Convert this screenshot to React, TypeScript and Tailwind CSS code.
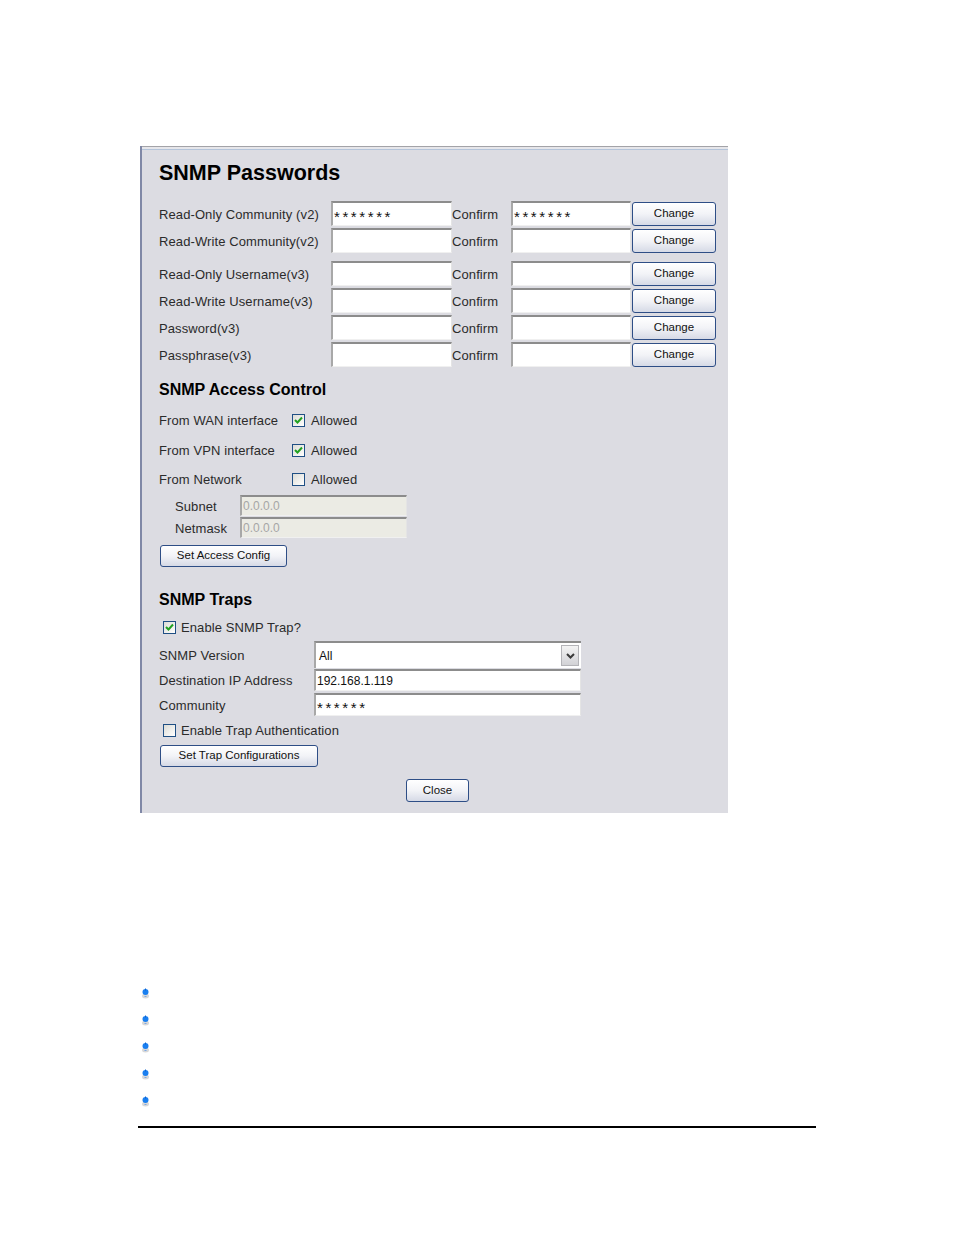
import React from "react";

const font = { fontFamily: '"Liberation Sans", Arial, sans-serif' };
const lbl = "text-[13px] tracking-[0.1px] text-[#2b2b2b] pt-[2px]";
const stars = "tracking-[2.6px] text-[15px] pt-[5px]";

function Field({ w, h, value, disabled, className = "" }: { w: string; h: string; value?: string; disabled?: boolean; className?: string }) {
  return (
    <div
      className={`${w} ${h} ${className} flex items-center border-t-2 border-l-2 border-t-[#8c8c8c] border-l-[#a8a8a8] border-r border-b border-r-[#e4e4e4] border-b-[#f0f0f0] ${disabled ? "bg-[#ebebe4] text-[#a6a6a6]" : "bg-white text-[#111]"} pl-[1px] leading-none overflow-hidden whitespace-nowrap`}
    >
      {value}
    </div>
  );
}

function Btn({ children, w, h = "h-[24px]", className = "" }: { children: React.ReactNode; w: string; h?: string; className?: string }) {
  return (
    <div
      className={`${w} ${h} ${className} flex items-center justify-center rounded-[3px] border border-[#2e4e86] bg-gradient-to-b from-white via-[#f2f3f7] to-[#d6dae6] text-[11.5px] text-[#111] leading-none`}
    >
      {children}
    </div>
  );
}

function Check({ checked }: { checked?: boolean }) {
  return (
    <div className="w-[13px] h-[13px] border border-[#1f4f84] bg-gradient-to-br from-[#dcdcd6] to-white flex items-center justify-center shrink-0">
      {checked && (
        <svg width="9" height="8" viewBox="0 0 9 8">
          <path d="M1 4 L3.5 6.5 L8 1.5" fill="none" stroke="#21a121" strokeWidth="2" />
        </svg>
      )}
    </div>
  );
}

function PwRow({ label, v1, v2, className = "" }: { label: string; v1?: string; v2?: string; className?: string }) {
  return (
    <div className={`flex items-center h-[25px] ${className}`}>
      <div className={`w-[172px] ${lbl}`}>{label}</div>
      <Field w="w-[121px]" h="h-[25px]" value={v1} className={stars} />
      <div className={`w-[59px] ${lbl}`}>Confirm</div>
      <Field w="w-[120px]" h="h-[25px]" value={v2} className={stars} />
      <Btn w="w-[84px]" className="ml-[1px]">Change</Btn>
    </div>
  );
}

function Bullet() {
  return (
    <div className="h-[27px] flex items-center">
      <svg width="9" height="11" viewBox="0 0 9 11">
        <ellipse cx="4.5" cy="8" rx="3.5" ry="2.5" fill="#d8d8d8" />
        <circle cx="4.5" cy="4" r="3" fill="#1a7ff0" />
        <rect x="4" y="0.5" width="1" height="2" fill="#0a62d0" />
        <rect x="3.5" y="8" width="2" height="1" fill="#7aa8e6" />
      </svg>
    </div>
  );
}

export default function App() {
  return (
    <div className="w-[954px] h-[1235px] bg-white" style={font}>
      <div className="pt-[146px] pl-[140px]">
        <div className="w-[588px] h-[667px] bg-[#dcdce2] border-l-2 border-l-[#8088a6] flex flex-col">
          <div className="h-[1px] bg-[#a3a3a8]" />
          <div className="h-[2px] bg-[#e6e6ea]" />
          <div className="h-[1px] bg-[#b4c4da]" />
          <div className="pl-[17px] flex flex-col">
            <div className="mt-[11px] h-[24px] leading-[24px] text-[21.5px] font-bold text-black">SNMP Passwords</div>
            <PwRow label="Read-Only Community (v2)" v1="*******" v2="*******" className="mt-[16px]" />
            <PwRow label="Read-Write Community(v2)" className="mt-[2px]" />
            <PwRow label="Read-Only Username(v3)" className="mt-[8px]" />
            <PwRow label="Read-Write Username(v3)" className="mt-[2px]" />
            <PwRow label="Password(v3)" className="mt-[2px]" />
            <PwRow label="Passphrase(v3)" className="mt-[2px]" />

            <div className="mt-[13px] h-[20px] leading-[20px] text-[16px] font-bold text-black">SNMP Access Control</div>
            {[
              ["From WAN interface", true, "mt-[10px]"],
              ["From VPN interface", true, "mt-[10px]"],
              ["From Network", false, "mt-[9px]"],
            ].map(([l, c, m]) => (
              <div key={l as string} className={`flex items-center h-[20px] ${m}`}>
                <div className={`w-[133px] ${lbl}`}>{l as string}</div>
                <Check checked={c as boolean} />
                <div className={`ml-[6px] ${lbl}`}>Allowed</div>
              </div>
            ))}
            <div className="flex items-center h-[21px] mt-[6px]">
              <div className={`w-[81px] pl-[16px] ${lbl}`}>Subnet</div>
              <Field w="w-[167px]" h="h-[21px]" value="0.0.0.0" disabled className="text-[12px]" />
            </div>
            <div className="flex items-center h-[21px] mt-[1px]">
              <div className={`w-[81px] pl-[16px] ${lbl}`}>Netmask</div>
              <Field w="w-[167px]" h="h-[21px]" value="0.0.0.0" disabled className="text-[12px]" />
            </div>
            <Btn w="w-[127px]" h="h-[22px]" className="mt-[7px] ml-[1px]">Set Access Config</Btn>

            <div className="mt-[23px] h-[20px] leading-[20px] text-[16px] font-bold text-black">SNMP Traps</div>
            <div className="flex items-center h-[20px] mt-[7px] pl-[4px]">
              <Check checked />
              <div className={`ml-[5px] ${lbl}`}>Enable SNMP Trap?</div>
            </div>
            <div className="flex items-center h-[27px] mt-[4px]">
              <div className={`w-[155px] ${lbl}`}>SNMP Version</div>
              <div className="w-[267px] h-[27px] flex items-center bg-white border-t-2 border-l-2 border-t-[#8c8c8c] border-l-[#a8a8a8]">
                <div className="flex-1 pl-[3px] text-[12px] text-[#111]">All</div>
                <div className="w-[18px] h-[21px] mr-[2px] bg-gradient-to-b from-[#f4f4f4] to-[#d2d2d6] border border-[#b4b4b8] flex items-center justify-center">
                  <svg width="9" height="6" viewBox="0 0 9 6">
                    <path d="M1 1 L4.5 4.5 L8 1" fill="none" stroke="#3a3a3a" strokeWidth="2" />
                  </svg>
                </div>
              </div>
            </div>
            <div className="flex items-center h-[22px] mt-[1px]">
              <div className={`w-[155px] ${lbl}`}>Destination IP Address</div>
              <Field w="w-[267px]" h="h-[22px]" value="192.168.1.119" className="text-[12px]" />
            </div>
            <div className="flex items-center h-[23px] mt-[2px]">
              <div className={`w-[155px] ${lbl}`}>Community</div>
              <Field w="w-[267px]" h="h-[23px]" value="******" className={stars} />
            </div>
            <div className="flex items-center h-[20px] mt-[4px] pl-[4px]">
              <Check />
              <div className={`ml-[5px] ${lbl}`}>Enable Trap Authentication</div>
            </div>
            <Btn w="w-[158px]" h="h-[22px]" className="mt-[5px] ml-[1px]">Set Trap Configurations</Btn>
            <Btn w="w-[63px]" h="h-[23px]" className="mt-[12px] ml-[247px]">Close</Btn>
          </div>
        </div>
      </div>
      <div className="pl-[141px] pt-[167px] flex flex-col">
        <Bullet />
        <Bullet />
        <Bullet />
        <Bullet />
        <Bullet />
      </div>
      <div className="ml-[138px] mt-[11px] w-[678px] h-[1.5px] bg-black" />
    </div>
  );
}
